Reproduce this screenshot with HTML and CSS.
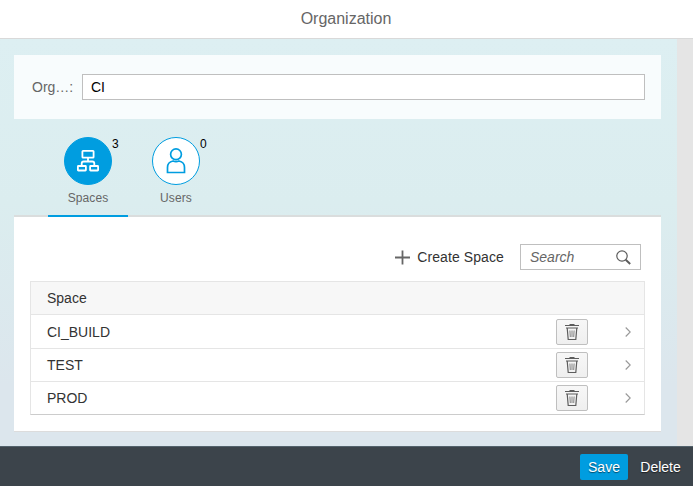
FILE: index.html
```html
<!DOCTYPE html>
<html lang="en">
<head>
<meta charset="utf-8">
<title>Organization</title>
<link rel="stylesheet" href="styles.css">
</head>
<body>
<svg class="defs" width="0" height="0" aria-hidden="true">
  <symbol id="trash" viewBox="0 0 16 18">
    <path d="M1 2.500h14M5.500 1.500h5M2 5h12M3.200 5l1 11.500h7.600l1-11.500" fill="none" stroke="#5c5c5c" stroke-width="1.200"/>
    <path d="M5.900 7.500l.4 6.500M8 7.500v6.500M10.100 7.500l-.4 6.500" fill="none" stroke="#777" stroke-width=".9"/>
  </symbol>
  <symbol id="chevron" viewBox="0 0 6 10">
    <path d="M.7.5 5.200 5 .7 9.500" fill="none" stroke="#999" stroke-width="1.100"/>
  </symbol>
</svg>
<header class="title">Organization</header>
<main class="body">
  <div class="content">
    <section class="form">
      <label class="label" for="org">Org…:</label>
      <input class="field" id="org" type="text" value="CI">
    </section>
    <nav class="tabs">
      <div class="tab tab-active">
        <div class="circle">
          <svg width="22" height="22" viewBox="0 0 22 22" fill="none" stroke="#fff" stroke-width="1.800">
            <rect x="5.400" y=".9" width="11.200" height="6.700" rx=".6"/>
            <path d="M11 7.500v4M4.700 16v-2.500q0-2 2-2h8.600q2 0 2 2V16"/>
            <rect x=".9" y="16" width="8" height="4.500" rx=".5"/>
            <rect x="13.100" y="16" width="8" height="4.500" rx=".5"/>
          </svg>
          <span class="count">3</span>
        </div>
        <span>Spaces</span>
      </div>
      <div class="tab">
        <div class="circle">
          <svg width="20" height="26" viewBox="0 0 20 26" fill="none" stroke="#009de0" stroke-width="1.700">
            <circle cx="10" cy="6.300" r="5.400"/>
            <path d="M1.500 24.500v-5q0-5.500 5.500-6.500 3 1.400 6 0 5.500 1 5.500 6.500v5z"/>
          </svg>
          <span class="count">0</span>
        </div>
        <span>Users</span>
      </div>
    </nav>
    <section class="panel">
      <div class="toolbar">
        <div class="create">
          <svg width="15" height="15" viewBox="0 0 15 15"><path d="M0 7.500h15M7.500.5v14" stroke="#666" stroke-width="1.800"/></svg>
          <span class="create-text">Create Space</span>
        </div>
        <div class="search">
          <span>Search</span>
          <svg width="15" height="15" viewBox="0 0 15 15" fill="none" stroke="#5c5c5c"><circle cx="6" cy="6" r="5.200" stroke-width="1.200"/><path d="m9.700 9.700 4.500 4.300" stroke-width="1.900"/></svg>
        </div>
      </div>
      <div class="table">
        <div class="row head">Space</div>
        <div class="row"><span class="name">CI_BUILD</span><button class="del"><svg width="16" height="18"><use href="#trash"/></svg></button><svg class="nav" width="6" height="10"><use href="#chevron"/></svg></div>
        <div class="row short"><span class="name">TEST</span><button class="del"><svg width="16" height="18"><use href="#trash"/></svg></button><svg class="nav" width="6" height="10"><use href="#chevron"/></svg></div>
        <div class="row short"><span class="name">PROD</span><button class="del"><svg width="16" height="18"><use href="#trash"/></svg></button><svg class="nav" width="6" height="10"><use href="#chevron"/></svg></div>
      </div>
    </section>
  </div>
  <div class="scroll"></div>
</main>
<footer class="footer">
  <button class="save">Save</button>
  <button class="delete">Delete</button>
</footer>
</body>
</html>
```
FILE: styles.css
```css
* { box-sizing: border-box; }
body {
  margin: 0;
  height: 486px;
  overflow: hidden;
  display: flex;
  flex-direction: column;
  font: 14px "Liberation Sans", Arial, sans-serif;
  color: #333;
}
.defs { position: absolute; }
button { font: inherit; border: 0; padding: 0; }
svg { display: block; flex: none; }
.title {
  height: 39px;
  line-height: 37px;
  padding-right: 1px;
  border-bottom: 1px solid #d9d9d9;
  text-align: center;
  font-size: 16px;
  color: #666;
  background: #fff;
}
.body {
  height: 407px;
  display: flex;
  background: linear-gradient(#ddeff2, #dbedef 40%, #dce6ed 85%, #dce6ed);
}
.content { flex: 1; padding: 16px 16px 0 14px; }
.scroll { width: 16px; background: #e5e5e5; }
.form {
  height: 64px;
  padding: 0 16px 0 18px;
  display: flex;
  align-items: center;
  background: #f8fcfd;
}
.label { width: 50px; color: #666; }
.field {
  flex: 1;
  min-width: 0;
  height: 26px;
  padding: 0 8px;
  border: 1px solid #bfbfbf;
  background: #fff;
  font: inherit;
  color: #000;
  outline: 0;
}
.tabs {
  height: 98px;
  padding: 18px 0 0 34px;
  display: flex;
  gap: 8px;
  border-bottom: 2px solid #dadddd;
}
.tab {
  width: 80px;
  height: 80px;
  display: flex;
  flex-direction: column;
  align-items: center;
  gap: 6px;
  font-size: 12px;
  letter-spacing: .1px;
  color: #666;
}
.tab-active { border-bottom: 2px solid #009de0; }
.circle {
  position: relative;
  width: 48px;
  height: 48px;
  flex: none;
  border: 1px solid #009de0;
  border-radius: 50%;
  display: flex;
  align-items: center;
  justify-content: center;
  background: #fff;
}
.tab-active .circle { background: #009de0; }
.count { position: absolute; left: 47px; top: -1px; color: #000; }
.panel {
  height: 215px;
  padding: 27px 16px 0;
  background: #fff;
  border-bottom: 1px solid #dcdcdc;
}
.toolbar { height: 26px; padding-right: 4px; display: flex; justify-content: flex-end; gap: 16px; }
.create { display: flex; align-items: center; gap: 7px; }
.create-text { letter-spacing: .1px; }
.search {
  width: 121px;
  border: 1px solid #bfbfbf;
  padding: 0 9px 0 9px;
  display: flex;
  align-items: center;
  justify-content: space-between;
  font-style: italic;
  color: #666;
}
.table { margin-top: 11px; border: 1px solid #e5e5e5; border-bottom-color: #ccc; }
.row {
  height: 34px;
  display: flex;
  align-items: center;
  padding: 0 13px 0 16px;
  border-bottom: 1px solid #e5e5e5;
}
.head { height: 33px; background: #f7f7f7; }
.short { height: 33px; }
.row:last-child { height: 32px; border-bottom: 0; }
.name { flex: 1; }
.del {
  width: 32px;
  height: 26px;
  margin-right: 37px;
  border: 1px solid #bfbfbf;
  border-radius: 2px;
  background: linear-gradient(#f7f7f7, #efefef);
  display: flex;
  align-items: center;
  justify-content: center;
}
.footer {
  height: 40px;
  padding: 7px 12px 0 0;
  border-top: 1px solid #53626c;
  background: #3c444b;
  display: flex;
  justify-content: flex-end;
  gap: 12px;
}
.save, .delete { height: 26px; color: #fff; text-shadow: 0 1px 1px #0008; }
.save { width: 48px; border-radius: 2px; background: #009de0; }
.delete { width: 41px; background: none; }
```
